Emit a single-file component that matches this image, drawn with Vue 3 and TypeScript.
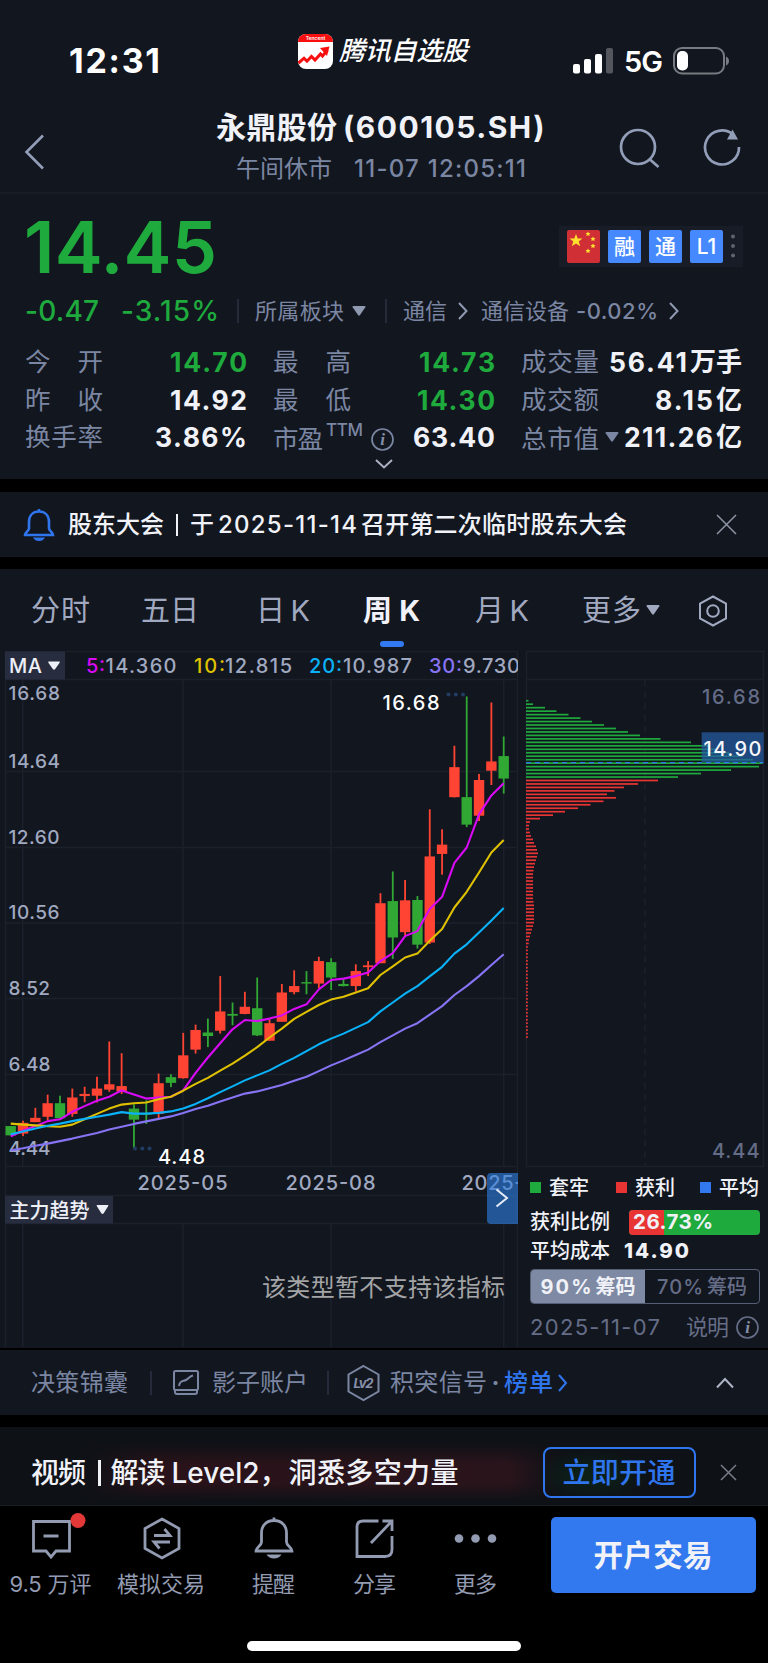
<script setup lang="ts">
import type { Directive } from 'vue'

/* Tracks a label's letters so that it fills the given width. */
const vFit: Directive<HTMLElement, number> = {
  mounted(el, binding) {
    const range = document.createRange()
    range.selectNodeContents(el)
    const natural = range.getBoundingClientRect().width
    const count = Array.from(el.textContent ?? '').length
    el.style.letterSpacing = `${(binding.value - natural) / Math.max(count - 1, 1)}px`
    el.style.width = `${binding.value}px`
  },
}

interface Quote { label: string; value: string; width: number; unit?: string; unitWidth?: number; tone: string }
const left: Quote[] = [
  { label: '今开', value: '14.70', width: 77, tone: 'down' },
  { label: '昨收', value: '14.92', width: 77, tone: '' },
  { label: '换手率', value: '3.86%', width: 92, tone: '' },
]
const middle: Quote[] = [
  { label: '最高', value: '14.73', width: 76, tone: 'down' },
  { label: '最低', value: '14.30', width: 78, tone: 'down' },
  { label: '市盈', value: '63.40', width: 82, tone: '' },
]
const right: Quote[] = [
  { label: '成交量', value: '56.41', width: 78, unit: '万手', unitWidth: 52, tone: '' },
  { label: '成交额', value: '8.15', width: 58, unit: '亿', unitWidth: 26, tone: '' },
  { label: '总市值', value: '211.26', width: 89, unit: '亿', unitWidth: 26, tone: '' },
]

const tabs = [
  { text: '分时', width: 59, on: false },
  { text: '五日', width: 58, on: false },
  { text: '日 K', width: 54, on: false },
  { text: '周 K', width: 57, on: true },
  { text: '月 K', width: 54, on: false },
]

/* Candles: high, body top, body bottom, low; 'r' rises, 'g' falls. */
type Candle = [number, number, number, number, 'r' | 'g']
const candles: Candle[] = [
  [1361, 1361, 1387, 1387, 'g'], [1346, 1352, 1382, 1389, 'r'], [1310, 1338, 1350, 1350, 'r'],
  [1273, 1297, 1335, 1345, 'r'], [1276, 1297, 1339, 1339, 'g'], [1256, 1281, 1327, 1335, 'r'],
  [1251, 1271, 1277, 1294, 'r'], [1223, 1256, 1276, 1295, 'r'], [1124, 1244, 1259, 1265, 'r'],
  [1157, 1249, 1264, 1271, 'r'], [1300, 1312, 1343, 1422, 'g'], [1289, 1325, 1329, 1355, 'g'],
  [1214, 1241, 1327, 1344, 'r'], [1216, 1224, 1240, 1252, 'g'], [1100, 1163, 1227, 1228, 'r'],
  [1077, 1092, 1147, 1158, 'r'], [1060, 1099, 1109, 1140, 'g'], [941, 1040, 1094, 1102, 'r'],
  [1015, 1047, 1052, 1079, 'g'], [985, 1027, 1047, 1048, 'r'], [945, 1031, 1107, 1109, 'g'],
  [1062, 1073, 1122, 1122, 'r'], [963, 987, 1069, 1069, 'r'], [925, 969, 986, 992, 'r'],
  [927, 958, 962, 992, 'g'], [887, 899, 962, 975, 'r'], [891, 902, 945, 980, 'g'],
  [948, 963, 969, 970, 'g'], [908, 927, 969, 984, 'r'], [899, 911, 916, 941, 'r'],
  [709, 737, 905, 905, 'r'], [648, 731, 833, 893, 'g'], [672, 729, 818, 828, 'r'],
  [717, 728, 853, 864, 'g'], [474, 606, 847, 851, 'r'], [530, 573, 599, 657, 'r'],
  [296, 356, 440, 441, 'r'], [158, 440, 517, 524, 'g'], [375, 392, 492, 507, 'r'],
  [175, 340, 366, 406, 'r'], [270, 325, 388, 430, 'g'],
]
const cx = (i: number) => 10.7 + i * 12.325
const cy = (v: number) => 640 + v / 2.8

const averages = [
  { tone: 'ma30', points: [1429, 1423, 1416, 1410, 1403, 1396, 1388, 1380, 1371, 1363, 1355, 1348, 1341, 1334, 1324, 1313, 1304, 1292, 1281, 1270, 1264, 1255, 1246, 1234, 1223, 1207, 1191, 1177, 1162, 1147, 1126, 1107, 1088, 1073, 1049, 1025, 994, 969, 941, 910, 880] },
  { tone: 'ma5', points: [1390, 1374, 1361, 1347, 1342, 1321, 1305, 1290, 1279, 1261, 1273, 1284, 1281, 1279, 1261, 1212, 1169, 1129, 1090, 1064, 1067, 1060, 1051, 1033, 1020, 978, 952, 948, 941, 931, 899, 877, 829, 815, 753, 719, 624, 581, 488, 435, 401] },
  { tone: 'ma10', points: [1354, 1357, 1359, 1361, 1363, 1357, 1342, 1327, 1312, 1301, 1297, 1295, 1286, 1279, 1262, 1243, 1226, 1206, 1186, 1164, 1140, 1113, 1088, 1061, 1041, 1022, 1007, 999, 987, 975, 938, 914, 889, 878, 842, 809, 749, 705, 651, 595, 560] },
  { tone: 'ma20', points: [1384, 1376, 1368, 1360, 1354, 1347, 1341, 1335, 1329, 1322, 1326, 1326, 1324, 1320, 1312, 1299, 1283, 1266, 1250, 1233, 1219, 1205, 1187, 1170, 1151, 1132, 1116, 1102, 1086, 1070, 1040, 1015, 990, 969, 942, 915, 878, 852, 819, 785, 750] },
]
const trace = (points: number[]) => points.map((v, i) => `${cx(i).toFixed(1)},${cy(v).toFixed(1)}`).join(' ')

const axis = [
  { text: '16.68', y: 699.8, w: 51.5 }, { text: '14.64', y: 767.5, w: 51.5 }, { text: '12.60', y: 843.8, w: 51 },
  { text: '10.56', y: 919.3, w: 51 }, { text: '8.52', y: 994.8, w: 41.5 }, { text: '6.48', y: 1070.8, w: 42 },
  { text: '4.44', y: 1155, w: 42 },
]

/* Lengths of the cost distribution bars, from the highest price down. */
const chips: number[] = [
  2.5, 7, 19, 30.5, 42.5, 54.5, 66, 78, 90, 102, 114, 134.5, 165, 182, 191, 203, 217, 227, 236.5, 233, 205, 175, 152,
  132, 112, 98, 88.5, 81, 90, 77.5, 64.5, 52, 39, 27, 14, 4, 3, 3, 4, 5, 7, 8, 10, 11, 12, 11, 10, 9, 8, 7.5,
  7, 7, 7, 7, 7, 7, 7, 7, 7.5, 8, 8, 8, 8, 8, 8, 7, 6, 5, 4, 3, 2.7,
  ...Array<number>(27).fill(1.8),
]
</script>

<template>
  <div class="screen">
    <div class="status">
      <span v-fit="91" class="clock">12:31</span>
      <svg class="brand-mark" width="35" height="36" viewBox="0 0 35 36">
        <rect width="35" height="35" rx="8" fill="#fff" />
        <path d="M0 8a8 8 0 0 1 8-8h19a8 8 0 0 1 8 8z" fill="#f80f0f" />
        <text x="17.500" y="6" class="mark-text">Tencent</text>
        <path d="M.5 29l5.500-4.800 3 3 4.500-4.700 3.500 3.500 5.500-6 2 2 5-6" fill="none" stroke="#f80f0f" stroke-width="3" />
        <path d="M22 14l9.500-1.500-2.500 9.500z" fill="#f80f0f" />
      </svg>
      <span v-fit="129" class="brand">腾讯自选股</span>
      <svg class="signal" width="41" height="26" viewBox="0 0 41 26">
        <rect x="0" y="16" width="7" height="9.500" rx="2" /><rect x="11" y="11" width="7" height="14.500" rx="2" />
        <rect x="22" y="6" width="7" height="19.500" rx="2" /><rect x="33" y="0" width="7" height="25.500" rx="2" opacity=".28" />
      </svg>
      <span v-fit="39" class="network">5G</span>
      <svg class="battery" width="57" height="28" viewBox="0 0 57 28">
        <rect x="1" y="1" width="50" height="25.500" rx="8" fill="none" stroke="#777a80" stroke-width="2" />
        <rect x="4" y="4" width="11" height="19.500" rx="5" fill="#fff" />
        <path d="M53 9.500q3 1.500 3 4.500t-3 4.500z" fill="#777a80" />
      </svg>
    </div>

    <header class="title-bar">
      <svg class="back" width="22" height="36" viewBox="0 0 22 36"><path d="M19 1.500L2.500 18 19 34.500" /></svg>
      <div class="titles">
        <div class="line name"><span v-fit="121">永鼎股份</span><span v-fit="201" class="code">(600105.SH)</span></div>
        <div class="line sub"><span v-fit="96">午间休市</span><span v-fit="172" class="moment">11-07 12:05:11</span></div>
      </div>
      <svg class="search" width="44" height="44" viewBox="0 0 44 44"><circle cx="20" cy="20" r="17" /><path d="M32 32.500l8.500 7.500" /></svg>
      <svg class="refresh" width="40" height="44" viewBox="0 0 40 44"><path d="M31 7.500A17 17 0 1 0 37 20" /><path class="solid" d="M30.500 2.500l5.500 10H25z" /></svg>
    </header>

    <section class="quote">
      <div class="price-row">
        <span v-fit="193" class="price">14.45</span>
        <div class="badges">
          <svg width="33" height="33" viewBox="0 0 33 33">
            <rect width="33" height="33" rx="2" fill="#d03035" />
            <g fill="#ffe12e">
              <path d="M9 4l1.700 4.500H15.500l-3.800 3 1.500 4.800L9 13.500l-4.200 2.800 1.500-4.800-3.800-3H7.300z" />
              <path d="M21 1.500l.8 1.500 1.700.1-1.200 1.200.3 1.700-1.600-.8-1.600.8.300-1.700-1.200-1.200 1.700-.1z" />
              <path d="M26 6.500l.8 1.500 1.700.1-1.200 1.200.3 1.700-1.600-.8-1.600.8.300-1.700-1.200-1.200 1.700-.1z" />
              <path d="M26 13.500l.8 1.500 1.700.1-1.200 1.200.3 1.700-1.600-.8-1.600.8.300-1.700-1.200-1.200 1.700-.1z" />
              <path d="M21 18.500l.8 1.500 1.700.1-1.200 1.200.3 1.700-1.600-.8-1.600.8.300-1.700-1.200-1.200 1.700-.1z" />
            </g>
          </svg>
          <span class="badge">融</span><span class="badge">通</span><span class="badge">L1</span>
          <svg class="more-dots" width="4" height="24" viewBox="0 0 4 24"><circle cx="2" cy="2.500" r="2" /><circle cx="2" cy="12" r="2" /><circle cx="2" cy="21.500" r="2" /></svg>
        </div>
      </div>
      <div class="change-row">
        <span v-fit="74" class="change">-0.47</span>
        <span v-fit="98" class="change percent">-3.15%</span>
        <i class="rule first"></i>
        <span v-fit="89" class="sector-label">所属板块</span>
        <svg class="caret" width="14" height="10" viewBox="0 0 14 10"><path d="M1.500 0h11q1.500 0 .8 1.200L8 9q-1 1.400-2 0L.7 1.200Q0 0 1.500 0z" /></svg>
        <i class="rule second"></i>
        <span v-fit="44" class="sector-a">通信</span>
        <svg class="chev" width="10" height="18" viewBox="0 0 10 18"><path d="M1 1l7.500 8L1 17" /></svg>
        <span v-fit="88" class="sector-b">通信设备</span>
        <span v-fit="82" class="sector-pct">-0.02%</span>
        <svg class="chev last" width="10" height="18" viewBox="0 0 10 18"><path d="M1 1l7.500 8L1 17" /></svg>
      </div>
      <div class="stats">
        <div class="col">
          <div v-for="q in left" :key="q.label" class="stat">
            <span class="stat-label"><b v-for="c in q.label" :key="c">{{ c }}</b></span>
            <span v-fit="q.width" class="value" :class="q.tone">{{ q.value }}</span>
          </div>
        </div>
        <div class="col">
          <div v-for="(q, i) in middle" :key="q.label" class="stat">
            <span v-if="i < 2" class="stat-label"><b v-for="c in q.label" :key="c">{{ c }}</b></span>
            <span v-else class="stat-label pe">
              <span v-fit="50">{{ q.label }}</span><sup v-fit="37">TTM</sup>
              <svg width="23" height="23" viewBox="0 0 23 23" class="info"><circle cx="11.500" cy="11.500" r="10.500" /><text x="11.500" y="17">i</text></svg>
            </span>
            <span v-fit="q.width" class="value" :class="q.tone">{{ q.value }}</span>
          </div>
        </div>
        <div class="col">
          <div v-for="(q, i) in right" :key="q.label" class="stat">
            <span class="stat-label" :class="{ low: i === 2 }"><b v-for="c in q.label" :key="c">{{ c }}</b></span>
            <svg v-if="i === 2" class="caret cap" width="14" height="10" viewBox="0 0 14 10"><path d="M1.500 0h11q1.500 0 .8 1.200L8 9q-1 1.400-2 0L.7 1.200Q0 0 1.500 0z" /></svg>
            <span v-fit="q.width" class="value" :class="q.tone">{{ q.value }}</span>
            <span v-fit="q.unitWidth ?? 0" class="value unit">{{ q.unit }}</span>
          </div>
        </div>
      </div>
      <svg class="expand" width="18" height="10" viewBox="0 0 18 10"><path d="M1 1l8 7.500L17 1" /></svg>
    </section>

    <section class="notice">
      <svg width="32" height="34" viewBox="0 0 32 34" class="notice-bell">
        <path d="M16 3.500C9.500 3.500 6 8 6 14v6.500c0 2-4 4-4 6.500h28c0-2.500-4-4.500-4-6.500V14C26 8 22.500 3.500 16 3.500zM16 1v2.500" />
        <path class="clapper" d="M10 29.500h12q-2 3.500-6 3.500t-6-3.500z" />
      </svg>
      <span v-fit="96" class="n-a">股东大会</span><i class="n-bar"></i><span v-fit="24" class="n-b">于</span>
      <span v-fit="139" class="n-c">2025-11-14</span><span v-fit="266" class="n-d">召开第二次临时股东大会</span>
      <svg class="close" width="21" height="21" viewBox="0 0 21 21"><path d="M1 1l19 19M20 1L1 20" /></svg>
    </section>

    <section class="market">
      <nav class="tabs">
        <div v-for="t in tabs" :key="t.text" class="tab" :class="{ on: t.on }"><span v-fit="t.width">{{ t.text }}</span></div>
        <div class="tab more"><span v-fit="59">更多</span><svg width="14" height="10" viewBox="0 0 14 10" class="caret light"><path d="M1.500 0h11q1.500 0 .8 1.200L8 9q-1 1.400-2 0L.7 1.200Q0 0 1.500 0z" /></svg></div>
        <svg class="gear" width="30" height="32" viewBox="0 0 30 32"><path d="M15 1.500L28 8.500v15L15 30.500 2 23.500v-15z" /><circle cx="15" cy="16" r="5.800" /></svg>
      </nav>

      <div class="boards">
        <svg class="kline" width="518" height="697" viewBox="0 651 518 697">
          <g class="grid">
            <path d="M5 651.500H518M5 679.500H518M5 771.500H518M5 847.500H518M5 923H518M5 998.500H518M5 1074.500H518M5 1166.500H518M5 1195.500H518M5 1223.500H518" />
            <path d="M5.500 651V1347M517.500 651V1347M22.700 680V1166M183 680V1166M331 680V1166M503.700 680V1166M22.700 1224V1347M183 1224V1347M331 1224V1347M503.700 1224V1347" />
          </g>
          <rect x="5" y="651.500" width="60" height="28" class="chip-button" />
          <text x="9" y="673" textLength="33" class="strong">MA</text>
          <path d="M49 661.500h10q1.500 0 .6 1.200l-4.400 6.300q-1.200 1.400-2.400 0l-4.400-6.300q-.9-1.200.6-1.200z" fill="#eef0f8" />
          <g class="legend">
            <text x="86" y="673" textLength="19" class="ma5">5:</text><text x="105.500" y="673" textLength="71">14.360</text>
            <text x="194" y="673" textLength="31" class="ma10">10:</text><text x="225" y="673" textLength="67">12.815</text>
            <text x="309" y="673" textLength="33" class="ma20">20:</text><text x="343" y="673" textLength="69">10.987</text>
            <text x="429" y="673" textLength="33" class="ma30">30:</text><text x="463" y="673" textLength="57">9.730</text>
          </g>
          <text v-for="a in axis" :key="a.text" x="8.500" :y="a.y" :textLength="a.w" class="tick">{{ a.text }}</text>
          <g v-for="(c, i) in candles" :key="i" :class="c[4]">
            <rect :x="cx(i) - 0.9" :y="cy(c[0])" width="1.800" :height="(c[3] - c[0]) / 2.8" />
            <rect :x="cx(i) - 5.2" :y="cy(c[1])" width="10.400" :height="(c[2] - c[1]) / 2.8" />
          </g>
          <polyline v-for="m in averages" :key="m.tone" :points="trace(m.points)" class="trace" :class="m.tone" />
          <g fill="#213d63"><circle cx="448.500" cy="694.500" r="2" /><circle cx="455.800" cy="694.500" r="2" /><circle cx="463" cy="694.500" r="2" /><circle cx="135" cy="1148.500" r="2" /><circle cx="142.300" cy="1148.500" r="2" /><circle cx="149.500" cy="1148.500" r="2" /></g>
          <text x="382.500" y="710" textLength="57" class="mark">16.68</text>
          <text x="158" y="1164" textLength="47" class="mark">4.48</text>
          <text x="137.500" y="1189.500" textLength="90" class="date">2025-05</text>
          <text x="285.500" y="1189.500" textLength="90" class="date">2025-08</text>
          <text x="461.500" y="1189.500" textLength="62" class="date">2025-</text>
          <rect x="5" y="1196" width="108" height="27.500" class="chip-button" />
          <text x="9.500" y="1217.500" textLength="80" class="strong">主力趋势</text>
          <path d="M97.500 1205h10q1.500 0 .6 1.200l-4.400 7q-1.200 1.400-2.400 0l-4.400-7q-.9-1.200.6-1.200z" fill="#eef0f8" />
          <path d="M518 1173H491q-4 0-4 4v43q0 4 4 4H518z" fill="#2f7ee0" fill-opacity=".62" />
          <path d="M496.500 1189.500l10.500 8.500-10.500 8.500" fill="none" stroke="#e6ecf7" stroke-width="2" />
          <text x="262" y="1295.500" textLength="243" class="unsupported">该类型暂不支持该指标</text>
        </svg>

        <aside class="cost">
          <svg width="250" height="516" viewBox="518 651 250 516">
            <path class="grid" d="M526.500 651.500H764M526.500 679.500H764M526.500 1166.500H764M526.500 651V1167M763.500 651V1167" />
            <path class="grid" d="M645 680V1166" stroke-dasharray="6.500 5" />
            <text x="702" y="703.700" textLength="58" class="faint">16.68</text>
            <text x="712" y="1157.700" textLength="47.500" class="faint">4.44</text>
            <rect v-for="(w, i) in chips" :key="i" x="526" :y="699.9 + i * 3.467" :width="w" height="1.700" :class="i < 23 ? 'trapped' : 'profit'" />
            <rect x="701.700" y="732.300" width="62" height="30" fill="#245ba3" fill-opacity=".72" />
            <text x="703.500" y="755.700" textLength="58" class="tag">14.90</text>
            <path d="M526 762.700H763.500" stroke="#2f7ae8" stroke-width="1.300" stroke-dasharray="5 4" />
          </svg>
          <div class="key-row">
            <i class="sq g"></i><span v-fit="40">套牢</span><i class="sq r"></i><span v-fit="40">获利</span><i class="sq b"></i><span v-fit="40">平均</span>
          </div>
          <div class="fact">
            <span v-fit="80">获利比例</span>
            <div class="ratio"><div class="ratio-fill"></div><strong v-fit="80">26.73%</strong></div>
          </div>
          <div class="fact cost-avg"><span v-fit="80">平均成本</span><strong v-fit="65">14.90</strong></div>
          <div class="switch"><div class="half on"><span v-fit="51">90%</span><span v-fit="40">筹码</span></div><div class="half"><span v-fit="46">70%</span><span v-fit="40">筹码</span></div></div>
          <div class="explain">
            <span v-fit="130">2025-11-07</span><span v-fit="43" class="word">说明</span>
            <svg width="23" height="23" viewBox="0 0 23 23" class="info"><circle cx="11.500" cy="11.500" r="10.500" /><text x="11.500" y="17">i</text></svg>
          </div>
        </aside>
      </div>
    </section>

    <section class="tools">
      <span v-fit="97">决策锦囊</span><i class="rule t1"></i>
      <svg class="shadow-icon" width="26" height="26" viewBox="0 0 26 26"><rect x="1" y="1" width="24" height="19" rx="1.500" /><path d="M2 20v2q0 2 2 2h18q2 0 2-2v-2M6 16c1-6 4-4.500 7-6s3-3.500 7-4.500" /></svg>
      <span v-fit="96" class="t-shadow">影子账户</span><i class="rule t2"></i>
      <svg class="level-icon" width="33" height="36" viewBox="0 0 33 36"><path d="M16.500 1L31.500 9.500v17L16.500 35 1.500 26.500v-17z" /><text x="16.500" y="23" textLength="20">Lv2</text></svg>
      <span v-fit="97" class="t-signal">积突信号</span><span class="dot">·</span><span v-fit="49" class="link">榜单</span>
      <svg class="chev link-chev" width="10" height="18" viewBox="0 0 10 18"><path d="M1 1l7 8-7 8" /></svg>
      <svg class="fold" width="18" height="12" viewBox="0 0 18 12"><path d="M1 10.500l8-8.500 8 8.500" /></svg>
    </section>

    <section class="promo">
      <span v-fit="55">视频</span><i class="p-bar"></i><span v-fit="55" class="p-read">解读</span><span v-fit="88" class="p-level">Level2</span>
      <span class="p-comma">，</span><span v-fit="170" class="p-rest">洞悉多空力量</span>
      <button class="open"><span v-fit="113">立即开通</span></button>
      <svg class="p-close" width="17" height="17" viewBox="0 0 17 17"><path d="M1 1l15 15M16 1L1 16" /></svg>
    </section>

    <footer class="dock">
      <div class="item comment">
        <svg width="56" height="48" viewBox="0 0 56 48"><path d="M10.500 8.500h36V38H33l-5 6-5-6H10.500zM20.500 23h15" /><circle class="alert" cx="55" cy="7.500" r="7.500" /></svg>
        <span v-fit="82">9.5 万评</span>
      </div>
      <div class="item trade">
        <svg width="40" height="48" viewBox="0 0 40 48"><path d="M21 6L38 15.500v20L21 45 4 35.500v-20z" /><path d="M13 22.500h16L23.500 16M29 29H13l5.500 6.500" /></svg>
        <span v-fit="88">模拟交易</span>
      </div>
      <div class="item remind">
        <svg width="42" height="48" viewBox="0 0 42 48"><path d="M21 7.500C13 7.500 8.500 13 8.500 20v9c0 4-5.500 5-5.500 9h36c0-4-5.500-5-5.500-9v-9C33.500 13 29 7.500 21 7.500zM21 4.500v3" /><path class="fill" d="M13.500 41.500h15q-2.500 4-7.500 4t-7.500-4z" /></svg>
        <span v-fit="43">提醒</span>
      </div>
      <div class="item share">
        <svg width="42" height="48" viewBox="0 0 42 48"><path d="M24.500 8H9Q3 8 3 14v29.500h28q7 0 7-7V23M17 30L37 9M28.500 8h9.500v10" /></svg>
        <span v-fit="43">分享</span>
      </div>
      <div class="item rest">
        <svg width="44" height="48" viewBox="0 0 44 48"><g class="fill"><circle cx="5" cy="25.500" r="4.300" /><circle cx="21.500" cy="25.500" r="4.300" /><circle cx="38" cy="25.500" r="4.300" /></g></svg>
        <span v-fit="43">更多</span>
      </div>
      <button class="account"><span v-fit="119">开户交易</span></button>
      <i class="home"></i>
    </footer>
  </div>
</template>

<style>
body { background: #000; }
</style>

<style scoped>
.screen { width: 768px; height: 1663px; overflow: hidden; background: #000; color: #f0f2f8; font-family: Inter, "Noto Sans CJK SC", sans-serif; font-size: 24px; line-height: 30px; }
.screen * { box-sizing: border-box; }
span, strong, sup { display: block; flex: none; white-space: pre; }
svg { display: block; flex: none; overflow: visible; fill: none; }
i { flex: none; }
button { padding: 0; font: inherit; }
section, .status, .title-bar { background: #12161f; }

.status { display: flex; align-items: flex-start; height: 100px; color: #fff; }
.clock { margin: 41px 0 0 69px; font-size: 34px; font-weight: 700; line-height: 40px; }
.brand-mark { margin: 34px 0 0 138px; }
.mark-text { font-size: 5px; fill: #fff; text-anchor: middle; font-weight: 600; }
.brand { margin: 36px 0 0 6px; font-size: 26px; font-weight: 500; font-style: italic; }
.signal { margin: 48px 0 0 105px; fill: #fff; }
.network { margin: 47px 0 0 10px; font-size: 29px; font-weight: 600; }
.battery { margin: 47px 0 0 10px; }

.title-bar { display: flex; height: 94px; border-bottom: 2px solid #181c25; }
.back { margin: 34px 0 0 24px; stroke: #929db7; stroke-width: 2.6; }
.titles { width: 330px; margin: 7px 0 0 170px; }
.line { display: flex; }
.name { font-size: 30px; font-weight: 700; line-height: 40px; }
.code { margin-left: 6px; }
.sub { margin: 6px 0 0 20px; color: #7b86a2; line-height: 32px; }
.moment { margin-left: 22px; font-weight: 500; }
.search { margin: 27px 0 0 72px; stroke: #929db7; stroke-width: 2.7; }
.refresh { margin: 27px 0 0 40px; stroke: #929db7; stroke-width: 2.7; }
.refresh .solid { fill: #929db7; stroke: none; }

.quote { height: 285px; }
.price-row { display: flex; justify-content: space-between; height: 84px; padding: 18px 25px 0 24px; }
.price { color: #1eaa3d; font-size: 72px; font-weight: 600; line-height: 70px; }
.badges { display: flex; gap: 8px; width: 184px; height: 41px; margin-top: 14px; padding: 4px 8px; background: #171c27; }
.badge { width: 33px; height: 33px; border-radius: 2px; background: #4689ff; color: #fff; font-size: 21px; font-weight: 500; line-height: 33px; text-align: center; }
.more-dots { margin-top: 4px; fill: #5e6370; }
.change-row { display: flex; align-items: center; height: 65px; padding: 0 0 0 25px; color: #7b86a2; font-size: 22px; }
.change { color: #1eaa3d; font-size: 28px; font-weight: 500; }
.percent { margin-left: 22px; }
.rule { width: 2px; height: 24px; background: #252b3a; }
.rule.first { margin-left: 18px; }
.sector-label { margin-left: 16px; }
.caret { margin-left: 8px; fill: #8f99b0; }
.rule.second { margin-left: 19px; }
.sector-a { margin-left: 16px; }
.chev { margin-left: 11px; stroke: #8f99b0; stroke-width: 2; }
.sector-b { margin-left: 13px; }
.sector-pct { margin-left: 7px; font-weight: 500; }
.chev.last { margin-left: 11px; }
.stats { display: grid; grid-template-columns: 222px 222px 221px; column-gap: 26px; height: 114px; padding-left: 25px; color: #7b86a2; }
.stat { display: flex; align-items: center; height: 37.8px; }
.stat-label { display: flex; justify-content: space-between; width: 78px; font-size: 25.5px; }
.stat-label b { font-weight: 400; }
.stat-label.low, .stat-label.pe { padding-top: 4px; }
.stat-label.pe { width: 110px; justify-content: flex-start; }
.pe sup { margin: -6px 0 0 3px; font-size: 17px; font-weight: 500; line-height: 24px; vertical-align: baseline; }
.pe .info { margin: 4px 0 0 8px; }
.info { stroke: #7b86a2; stroke-width: 1.7; }
.info text { stroke: none; fill: #858fa8; font: italic 700 17px "Liberation Serif", serif; text-anchor: middle; }
.caret.cap { margin-left: 6px; fill: #7b86a2; }
.value { margin-left: auto; color: #f0f2f8; font-size: 26.5px; font-weight: 700; }
.value.down { color: #1eaa3d; }
.value.unit { margin-left: 3px; font-size: 26px; }
.expand { margin: 2px 0 0 375px; stroke: #aab1c2; stroke-width: 2; }

.notice { display: flex; align-items: center; height: 65px; margin-top: 13px; font-weight: 500; }
.notice-bell { margin-left: 23px; stroke: #2f75ee; stroke-width: 2.6; }
.clapper { fill: #2f75ee; stroke: none; }
.n-a { margin-left: 13px; }
.n-bar { width: 2px; height: 22px; margin-left: 12px; background: #f0f2f8; }
.n-b { margin-left: 12px; }
.n-c { margin-left: 4px; }
.n-d { margin-left: 4px; }
.close { margin-left: 89px; stroke: #8f95a4; stroke-width: 1.5; }

.market { height: 779px; margin-top: 12px; }
.tabs { display: flex; height: 82px; padding-top: 22px; color: #a0a9c0; font-size: 29px; line-height: 40px; }
.tab:nth-child(1) { margin-left: 31px; }
.tab:nth-child(2) { margin-left: 51px; }
.tab:nth-child(3) { margin-left: 57px; }
.tab:nth-child(4) { margin-left: 53px; }
.tab:nth-child(5) { margin-left: 55px; }
.tab.on { color: #f0f2f8; font-weight: 700; }
.tab.on::after { content: ""; display: block; width: 24px; height: 6px; margin: 10px auto 0; border-radius: 3px; background: #3278ee; }
.tab.more { display: flex; margin-left: 53px; }
.caret.light { margin: 14px 0 0 5px; fill: #a0a9c0; }
.gear { margin: 4px 0 0 38px; stroke: #a0a9c0; stroke-width: 2; }

.boards { display: flex; }
.kline { overflow: hidden; }
.grid { stroke: #1b202b; stroke-width: 1.5; fill: none; }
.chip-button { fill: #272d3e; }
text { font-size: 20px; font-weight: 500; }
.strong { fill: #eef0f8; }
.legend text { fill: #a0a9c0; }
.legend .ma5 { fill: #d90af5; }
.legend .ma10 { fill: #dfc100; }
.legend .ma20 { fill: #0ab2fa; }
.legend .ma30 { fill: #8674f5; }
.tick { fill: #a0a9c0; font-size: 19px; }
.date { fill: #a0a9c0; }
.mark { fill: #fff; }
.faint { fill: #646c87; }
.tag { fill: #f5f7fc; }
.unsupported { fill: #a3a4a6; font-size: 24px; font-weight: 400; }
.r { fill: #ff4433; }
.g { fill: #30a833; }
.trace { fill: none; stroke-width: 2.1; stroke-linejoin: round; }
.trace.ma5 { stroke: #d90af5; }
.trace.ma10 { stroke: #dfc100; }
.trace.ma20 { stroke: #0ab2fa; }
.trace.ma30 { stroke: #8674f5; }
.trapped { fill: #1eaa3d; }
.profit { fill: #e93434; }

.cost { width: 250px; font-size: 20px; font-weight: 500; }
.key-row { display: flex; align-items: center; height: 41px; padding-left: 12px; }
.key-row span { margin-left: 8px; }
.key-row i { width: 11px; height: 11px; }
.key-row .g { background: #1eaa3d; }
.key-row .r { margin-left: 27px; background: #e93434; }
.key-row .b { margin-left: 25px; background: #3278ee; }
.fact { display: flex; align-items: center; height: 28px; padding-left: 12px; }
.ratio { position: relative; width: 131px; height: 25px; margin-left: 19px; border-radius: 4px; overflow: hidden; background: #1eaa3d; }
.ratio-fill { width: 26.73%; height: 25px; background: #e93434; }
.ratio strong { position: absolute; left: 4px; top: -3px; font-size: 20.5px; font-weight: 700; }
.cost-avg { height: 30px; }
.cost-avg strong { margin-left: 14px; font-size: 20.5px; font-weight: 800; }
.switch { display: flex; width: 230px; height: 35px; margin: 3px 0 0 12px; border: 1.5px solid #565e75; border-radius: 4px; overflow: hidden; color: #656d87; }
.half { display: flex; width: 50%; gap: 4px; align-items: center; justify-content: center; }
.half.on { background: #7e89a3; color: #f0f2f8; font-weight: 700; }
.explain { display: flex; align-items: center; height: 46px; padding-left: 12px; color: #656d87; font-size: 22px; font-weight: 400; }
.explain .word { margin-left: 26px; }
.explain .info { margin-left: 7px; stroke: #656d87; }

.tools { display: flex; align-items: center; height: 65px; margin-top: 2px; padding-left: 31px; color: #7b86a2; }
.t1 { margin-left: 22px; }
.shadow-icon { margin-left: 21px; stroke: #7b86a2; stroke-width: 2; }
.t-shadow { margin-left: 13px; }
.t2 { margin-left: 19px; }
.level-icon { margin-left: 18px; stroke: #7b86a2; stroke-width: 2; }
.level-icon text { stroke: none; fill: #8892aa; font-size: 13px; font-style: italic; font-weight: 700; text-anchor: middle; }
.t-signal { margin-left: 10px; }
.dot { width: 17px; text-align: center; font-weight: 700; }
.link { color: #2f75ee; font-weight: 500; }
.chev.link-chev { margin-left: 5px; stroke: #2f75ee; }
.fold { margin-left: 148px; stroke: #aeb5c5; stroke-width: 2; }

.promo { display: flex; align-items: center; height: 79px; margin-top: 12px; padding: 13px 0 0 31px; border-bottom: 1px solid #1b1d22; background: radial-gradient(ellipse 60px 26px at 592px 48px, #0c2018 20%, transparent), linear-gradient(#0e1116 0 20%, transparent 48% 72%, #0e1116 95%), linear-gradient(90deg, #0e1116 11%, #291219 20%, #2a141b 66%, #0e1116 73%); font-size: 28px; font-weight: 500; }
.p-bar { width: 2.5px; height: 26px; margin-left: 12px; background: #f0f2f8; }
.p-read { margin-left: 10px; }
.p-level { margin-left: 6px; }
.p-comma { width: 28px; }
.p-rest { margin-left: 1px; }
.open { display: flex; flex: none; align-items: center; justify-content: center; width: 153px; height: 51px; margin-left: 84px; border: 2px solid #2f75ee; border-radius: 8px; background: transparent; color: #2f75ee; }
.p-close { margin-left: 24px; stroke: #777c87; stroke-width: 1.5; }

.dock { display: grid; grid-template-columns: 101px 120px 105px 97px 105px 1fr; height: 157px; color: #929bb1; font-size: 22px; }
.item { display: flex; flex-direction: column; align-items: center; padding-top: 7px; }
.item svg { stroke: #929bb1; stroke-width: 2.8; }
.item span { margin-top: 8px; }
.item .fill { fill: #929bb1; stroke: none; }
.alert { fill: #e33838; stroke: none; }
.account { display: flex; align-items: center; justify-content: center; width: 205px; height: 76px; margin: 11px 0 0 23px; border: 0; border-radius: 5px; background: #3278ee; color: #f0f2f8; font-size: 29.5px; font-weight: 700; }
.account span { margin-left: -1px; }
.home { width: 274px; height: 10px; margin: 29px 0 0 247px; border-radius: 5px; background: #fff; grid-column: 1 / -1; }
</style>
